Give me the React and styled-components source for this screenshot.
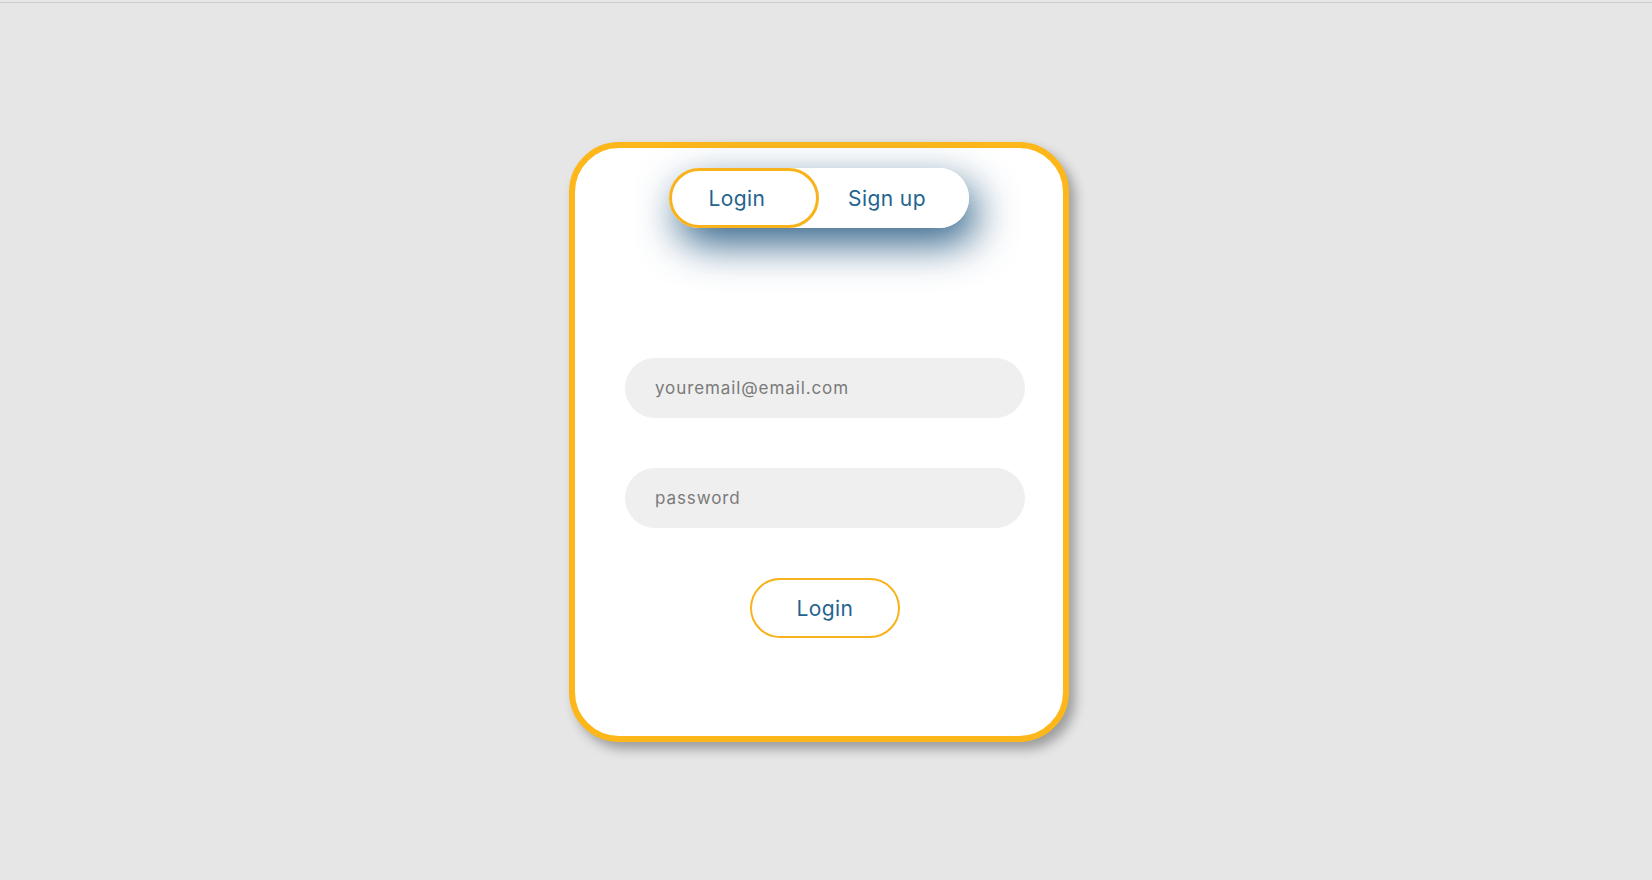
import React, { useState } from "react";
import styled, { createGlobalStyle } from "styled-components";

const GlobalStyle = createGlobalStyle`
  html, body {
    margin: 0;
    padding: 0;
    background: #e6e6e6;
    font-family: "Inter", "Open Sans", sans-serif;
  }
  * {
    box-sizing: border-box;
  }
`;

const Page = styled.div`
  margin-top: 2px;
  border-top: 1px solid #cfcfcf;
  min-height: 877px;
  display: flex;
  justify-content: center;
  align-items: flex-start;
  padding-top: 139px;
  padding-right: 14px;
`;

const Card = styled.div`
  width: 500px;
  height: 600px;
  background: #ffffff;
  border: 6px solid #fdb71a;
  border-radius: 50px;
  box-shadow: 6px 7px 12px rgba(0, 0, 0, 0.32);
  padding-top: 20px;
  display: flex;
  flex-direction: column;
  align-items: center;
`;

const Toggle = styled.div`
  width: 300px;
  height: 60px;
  background: #ffffff;
  border-radius: 30px;
  display: flex;
  box-shadow: 8px 16px 40px rgba(28, 82, 124, 0.9);
`;

const Tab = styled.button`
  width: 150px;
  height: 60px;
  border-radius: 30px;
  background: #ffffff;
  border: 3px solid ${({ active }) => (active ? "#f8b21b" : "transparent")};
  color: #25638f;
  font-family: inherit;
  font-size: 21px;
  font-weight: 400;
  letter-spacing: 0.4px;
  padding: 0 14px 0 0;
  cursor: pointer;
`;

const Form = styled.form`
  width: 100%;
  margin-top: 130px;
  padding-left: 50px;
  display: flex;
  flex-direction: column;
  gap: 50px;
`;

const Field = styled.input`
  width: 400px;
  height: 60px;
  border: none;
  border-radius: 30px;
  background: #efefef;
  padding: 0 30px;
  font-family: inherit;
  font-size: 17px;
  letter-spacing: 0.9px;
  color: #555;
  outline: none;

  &::placeholder {
    color: #7a7a7a;
  }
`;

const Submit = styled.button`
  align-self: flex-start;
  margin-left: 125px;
  width: 150px;
  height: 60px;
  border-radius: 30px;
  background: #ffffff;
  border: 2px solid #f8b21b;
  color: #25638f;
  font-family: inherit;
  font-size: 21px;
  letter-spacing: 0.4px;
  cursor: pointer;
`;

export default function App() {
  const [mode, setMode] = useState("login");

  return (
    <>
      <GlobalStyle />
      <Page>
        <Card>
          <Toggle>
            <Tab active={mode === "login"} onClick={() => setMode("login")}>
              Login
            </Tab>
            <Tab active={mode === "signup"} onClick={() => setMode("signup")}>
              Sign up
            </Tab>
          </Toggle>
          <Form onSubmit={(e) => e.preventDefault()}>
            <Field type="email" placeholder="youremail@email.com" />
            <Field type="password" placeholder="password" />
            <Submit type="submit">Login</Submit>
          </Form>
        </Card>
      </Page>
    </>
  );
}
